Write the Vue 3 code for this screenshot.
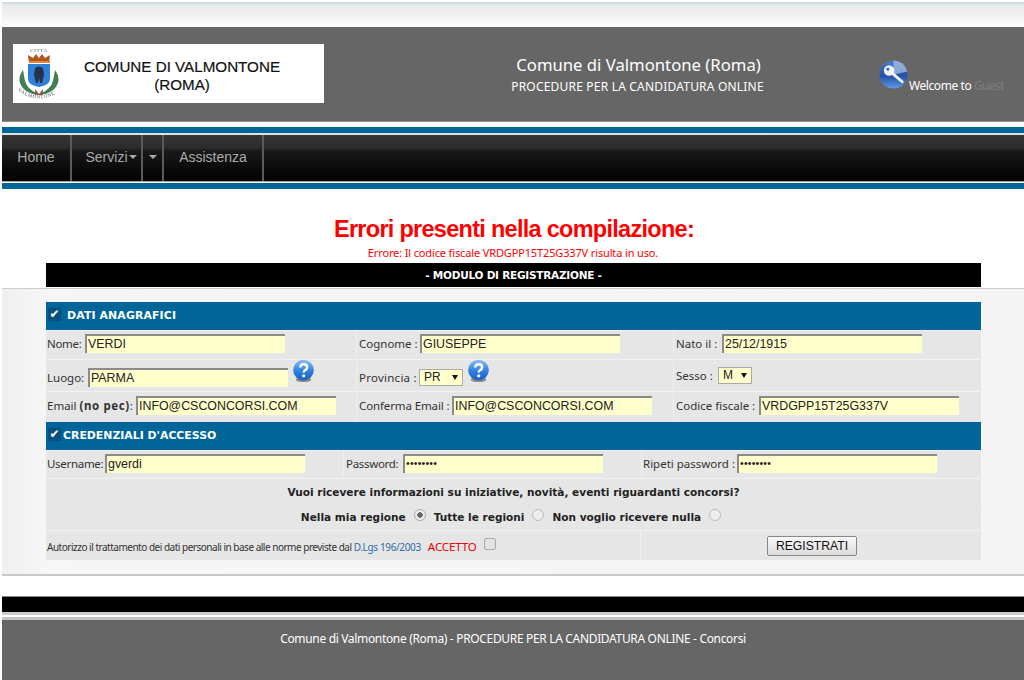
<script setup>
const news = [
  { label: 'Nella mia regione', on: true },
  { label: 'Tutte le regioni', on: false },
  { label: 'Non voglio ricevere nulla', on: false }
]
</script>

<template>
  <div class="page">
    <div class="topstrip"></div>
    <header class="head">
      <div class="logo">
        <svg class="emblem" viewBox="0 0 52 56" width="52" height="56" aria-hidden="true">
          <text x="26" y="6" text-anchor="middle" class="emb-t">CITTA</text>
          <path d="M16 17 L15 9 L20 12 L23 8 L26 12 L29 8 L32 12 L37 9 L36 17 Z" fill="#b5541c" />
          <rect x="16" y="15" width="21" height="2" fill="#d98a3c" />
          <path d="M15 18 H37 V33 Q37 39 26 41 Q15 39 15 33 Z" fill="#2f80d8" />
          <path d="M22 22 Q26 19 30 22 L31 29 L29 37 H27 L26 32 L25 37 H23 L21 29 Z" fill="#26324a" />
          <path d="M10 24 Q2 35 12 44 Q18 49 25 48 Q14 43 12 35 Z" fill="#3f7f52" />
          <path d="M42 24 Q50 35 40 44 Q34 49 27 48 Q38 43 40 35 Z" fill="#3f7f52" />
          <path d="M22 43 L26 48 L30 43 V49 H22 Z" fill="#8c5a4a" />
          <path id="emb-arc" d="M3 43 Q26 62 49 43" fill="none" />
          <text class="emb-t"><textPath href="#emb-arc" startOffset="4%">VALMONTONE</textPath></text>
        </svg>
        <div class="logo-text">COMUNE DI VALMONTONE<br />(ROMA)</div>
      </div>
      <div class="title">
        <div class="t1">Comune di Valmontone (Roma)</div>
        <div class="t2">PROCEDURE PER LA CANDIDATURA ONLINE</div>
      </div>
      <div class="welcome">
        <svg class="key" viewBox="0 0 30 30" width="29" height="29" aria-hidden="true">
          <defs>
            <linearGradient id="kg" x1="0" y1="0" x2="0" y2="1">
              <stop offset="0" stop-color="#4f7fcc" />
              <stop offset="0.55" stop-color="#2350a8" />
              <stop offset="1" stop-color="#5f9ae6" />
            </linearGradient>
          </defs>
          <circle cx="15" cy="15" r="14.5" fill="url(#kg)" />
          <path d="M15 15 L29.3 12 A14.5 14.5 0 0 0 15 .5 Z" fill="#a9bfdf" opacity=".75" />
          <path d="M13 13 L24 22.5" stroke="#f2f4f8" stroke-width="3" stroke-linecap="round" />
          <circle cx="10.5" cy="10.8" r="5.4" fill="#f2f4f8" />
          <circle cx="9.2" cy="9.6" r="1.5" fill="#2c62b8" />
        </svg>
        <span class="wtext">Welcome to <span class="guest">Guest</span></span>
      </div>
    </header>
    <div class="blue-top"></div>
    <nav class="nav">
      <a class="ni n-home">Home</a>
      <a class="ni n-serv">Servizi<i class="caret"></i></a>
      <a class="ni n-car"><i class="caret"></i></a>
      <a class="ni n-ass">Assistenza</a>
    </nav>
    <div class="blue-bot"></div>

    <h1 class="err-title">Errori presenti nella compilazione:</h1>
    <p class="err-msg">Errore: Il codice fiscale VRDGPP15T25G337V risulta in uso.</p>
    <div class="wrap top"><div class="modbar">- MODULO DI REGISTRAZIONE -</div></div>

    <section class="panel">
      <div class="wrap">
        <div class="sec sec1"><span class="chk">✔</span>DATI ANAGRAFICI</div>

        <div class="row grid3 r1">
          <div class="cell"><label class="l38 tight">Nome:</label><span class="inp">VERDI</span></div>
          <div class="cell"><label class="l61">Cognome :</label><span class="inp">GIUSEPPE</span></div>
          <div class="cell"><label class="l46">Nato il :</label><span class="inp">25/12/1915</span></div>
        </div>
        <div class="row grid3 r2">
          <div class="cell low"><label class="l41">Luogo:</label><span class="inp">PARMA</span>
            <svg class="help h1" viewBox="0 0 24 24" width="23" height="24" aria-hidden="true">
              <defs>
                <linearGradient id="hg" x1="0" y1="0" x2="0" y2="1">
                  <stop offset="0" stop-color="#8fc0f5" />
                  <stop offset="0.55" stop-color="#2e7fe0" />
                  <stop offset="1" stop-color="#1c5fc0" />
                </linearGradient>
              </defs>
              <ellipse cx="12" cy="21" rx="8" ry="2.6" fill="#8a8a8a" />
              <circle cx="12" cy="11" r="10.8" fill="url(#hg)" />
              <path d="M8.4 8.4 Q9 5 12.2 5 Q15.8 5 15.8 8 Q15.8 10 13.6 11.2 Q12.2 12 12.2 13.6" fill="none" stroke="#fff" stroke-width="2.5" />
              <circle cx="12.2" cy="17" r="1.7" fill="#fff" />
            </svg>
          </div>
          <div class="cell low"><label class="l60 l-prov">Provincia :</label><span class="sel s-pr">PR<i class="arr"></i></span>
            <svg class="help h2" viewBox="0 0 24 24" width="23" height="24" aria-hidden="true">
              <ellipse cx="12" cy="21" rx="8" ry="2.6" fill="#8a8a8a" />
              <circle cx="12" cy="11" r="10.8" fill="url(#hg)" />
              <path d="M8.4 8.4 Q9 5 12.2 5 Q15.8 5 15.8 8 Q15.8 10 13.6 11.2 Q12.2 12 12.2 13.6" fill="none" stroke="#fff" stroke-width="2.5" />
              <circle cx="12.2" cy="17" r="1.7" fill="#fff" />
            </svg>
          </div>
          <div class="cell"><label class="l42">Sesso :</label><span class="sel s-m">M<i class="arr"></i></span></div>
        </div>
        <div class="row grid3 r3">
          <div class="cell"><label class="l89">Email <b>(no pec)</b>:</label><span class="inp">INFO@CSCONCORSI.COM</span></div>
          <div class="cell"><label class="l93 semi">Conferma Email :</label><span class="inp">INFO@CSCONCORSI.COM</span></div>
          <div class="cell"><label class="l83">Codice fiscale :</label><span class="inp">VRDGPP15T25G337V</span></div>
        </div>

        <div class="sec sec2"><span class="chk">✔</span>CREDENZIALI D'ACCESSO</div>

        <div class="row gridc r4">
          <div class="cell"><label class="l58 tight">Username:</label><span class="inp">gverdi</span></div>
          <div class="cell c-pw"><label class="l57 tight">Password:</label><span class="inp dots">••••••••</span></div>
          <div class="cell"><label class="l94">Ripeti password :</label><span class="inp dots">••••••••</span></div>
        </div>

        <div class="news">
          <div class="q">Vuoi ricevere informazioni su iniziative, novità, eventi riguardanti concorsi?</div>
          <div class="opts">
            <template v-for="n in news" :key="n.label">
              <span>{{ n.label }}</span><i class="radio" :class="{ on: n.on }"></i>
            </template>
          </div>
        </div>

        <div class="row gridf">
          <div class="cell c-auth">
            <span class="auth">Autorizzo il trattamento dei dati personali in base alle norme previste dal <a>D.Lgs 196/2003</a></span>
            <span class="acc">ACCETTO</span><i class="cb"></i>
          </div>
          <div class="cell c-btn"><span class="btn">REGISTRATI</span></div>
        </div>
      </div>
    </section>

    <div class="foot-black"></div>
    <footer class="foot">Comune di Valmontone (Roma) - PROCEDURE PER LA CANDIDATURA ONLINE - Concorsi</footer>
  </div>
</template>

<style>
html, body { margin: 0; background: #fff; overflow: hidden; }
</style>

<style scoped>
.page {
  width: 1024px;
  height: 680px;
  overflow: hidden;
  font-family: "Noto Sans", "Open Sans", sans-serif;
  color: #333;
  background: #fff;
  font-size: 12px;
}
.topstrip {
  height: 23px;
  margin: 2px 0 2px 2px;
  background: linear-gradient(#c4d8dc 0, #e6ebec 3px, #f0eeee 10px, #fbfbfb 23px);
}
.head {
  margin-left: 2px;
  height: 94px;
  background: #666;
  border-bottom: 1px solid #8c8c8c;
  display: flex;
  align-items: flex-start;
  position: relative;
}
.logo {
  margin: 17px 0 0 11px;
  width: 311px;
  height: 59px;
  background: #fff;
  display: flex;
  align-items: center;
}
.emblem { flex: none; filter: blur(.35px); }
.emb-t { font: 5px "Liberation Serif", serif; fill: #555; letter-spacing: .6px; }
.logo-text {
  font: 15.2px/18px "Liberation Sans", Arial, sans-serif;
  color: #111;
  text-align: center;
  width: 198px;
  margin: 4px 0 0 18px;
  -webkit-text-stroke: .2px #111;
  white-space: nowrap;
}
.title {
  position: absolute;
  left: 434px;
  width: 403px;
  top: 26px;
  text-align: center;
  color: #fff;
}
.t1 { font-size: 16.7px; line-height: 24px; padding-left: 2px; }
.t2 { font-size: 12px; line-height: 20px; letter-spacing: .2px; }
.welcome { position: absolute; left: 877px; top: 33px; display: flex; align-items: flex-start; }
.key { flex: none; }
.wtext { margin: 17px 0 0 1px; font-size: 12px; letter-spacing: -.42px; color: #fff; white-space: nowrap; }
.guest { color: #7d7d7d; letter-spacing: -.7px; }

.blue-top {
  margin: 5px 0 0 2px;
  height: 6px;
  background: #006699;
  border-bottom: 2px solid #dce4e8;
}
.nav {
  margin-left: 2px;
  height: 46px;
  display: flex;
  background: linear-gradient(#353535 0, #2a2a2a 14px, #1a1a1a 15px, #000 45px);
  border-bottom: 1px solid #aaa;
}
.ni {
  box-sizing: border-box;
  height: 46px;
  padding-bottom: 2px;
  display: flex;
  align-items: center;
  justify-content: center;
  font: 14px "Liberation Sans", Arial, sans-serif;
  color: #aaa;
  border-right: 2px solid #5a5a5a;
}
.n-home { width: 70px; }
.n-serv { width: 71px; padding-left: 9px; }
.n-car { width: 21px; }
.n-ass { width: 100px; }
.caret {
  display: inline-block;
  width: 0; height: 0;
  border: 4px solid transparent;
  border-top-color: #aaa;
  border-bottom: 0;
  margin-left: 1px;
}
.blue-bot {
  margin: 1px 0 0 2px;
  height: 6px;
  background: #006699;
}

.err-title {
  margin: 26px 0 0 4px;
  text-align: center;
  color: #f00;
  font: bold 23.5px/28px "Liberation Sans", Arial, sans-serif;
  letter-spacing: -.72px;
}
.err-msg {
  margin: 2px 0 2px 2px;
  text-align: center;
  color: #f00;
  font-size: 11px;
  line-height: 16px;
  letter-spacing: -.14px;
}
.wrap { margin-left: 44px; width: 935px; }
.wrap.top { margin-left: 46px; }
.modbar {
  margin-top: 1px;
  height: 24px;
  background: #000;
  color: #fff;
  text-align: center;
  font: bold 10.5px/24px "DejaVu Sans", sans-serif;
  letter-spacing: -.24px;
}
.panel {
  margin: 1px 0 0 2px;
  background: linear-gradient(90deg, #f0f0f0, #f6f6f6 46px, #f4f4f4);
  border-top: 1px solid #ccc;
  border-bottom: 2px solid #c8c8c8;
  padding-top: 13px;
  height: 272px;
}
.sec {
  height: 28px;
  background: #006699;
  color: #fff;
  font: bold 10.9px/28px "DejaVu Sans", sans-serif;
  display: flex;
  align-items: center;
}
.sec1 { letter-spacing: .13px; }
.chk {
  width: 13px; height: 13px;
  background: #0b4f80;
  margin: -3px 6px 0 2px;
  font-size: 12px;
  line-height: 12px;
  text-align: center;
}
.sec2 .chk { margin-right: 2px; }
.row { display: grid; background: #e6e6e6; border-top: 1px solid #f2f2f2; box-sizing: border-box; }
.grid3 { grid-template-columns: 311px 317px 307px; }
.gridc { grid-template-columns: 298px 298px 339px; }
.gridf { grid-template-columns: 595px 340px; height: 30px; }
.r1 { height: 29px; padding-bottom: 4px; }
.r2 { height: 32px; }
.r3 { height: 31px; padding-bottom: 3px; }
.r4 { height: 28px; padding-bottom: 2px; }
.low { padding-top: 4px; }
.cell {
  display: flex;
  align-items: center;
  padding-left: 1px;
  border-right: 1px solid #f0f0f0;
  white-space: nowrap;
  min-width: 0;
  position: relative;
}
.cell:last-child { border-right: 0; }
.cell label { flex: none; font-size: 11.5px; }
.cell label b { letter-spacing: .6px; }
.cell label.tight { letter-spacing: -.3px; }
.cell label.semi { letter-spacing: -.12px; }
.grid3 .cell + .cell { padding-left: 2px; }
.l38 { width: 38px; }
.l41 { width: 41px; }
.l42 { width: 42px; }
.l46 { width: 46px; }
.l57 { width: 57px; }
.l58 { width: 58px; }
.l60 { width: 60px; }
.l61 { width: 61px; }
.l83 { width: 83px; }
.l89 { width: 89px; }
.l93 { width: 93px; }
.l94 { width: 94px; }
.l-prov { letter-spacing: .25px; }
.inp {
  box-sizing: border-box;
  height: 19px;
  width: 200px;
  background: #ffffcc;
  border-top: 2px solid #8b8b8b;
  border-left: 2px solid #8b8b8b;
  font: 12.4px/16px "Liberation Sans", Arial, sans-serif;
  color: #222;
  padding-left: 1px;
}
.dots { font-size: 10.5px; letter-spacing: .2px; line-height: 15px; }
.c-pw { padding-left: 2px; }
.sel {
  box-sizing: border-box;
  height: 17px;
  background: #ffffcc;
  border: 1px solid #aaa;
  font: 12px/15px "Liberation Sans", Arial, sans-serif;
  color: #222;
  display: inline-flex;
  align-items: center;
  padding-left: 4px;
  position: relative;
}
.s-pr { width: 44px; }
.s-m { width: 34px; }
.arr {
  position: absolute;
  right: 4px;
  top: 5px;
  width: 0; height: 0;
  border: 3.5px solid transparent;
  border-top: 5px solid #111;
  border-bottom: 0;
}
.help { position: absolute; top: -1px; }
.h1 { left: 246px; }
.h2 { left: 110px; }
.news {
  height: 52px;
  background: #e6e6e6;
  border-top: 1px solid #f2f2f2;
  box-sizing: border-box;
  text-align: center;
  font: bold 10.55px "DejaVu Sans", sans-serif;
  color: #222;
  padding-top: 6px;
}
.q { line-height: 14px; }
.opts { margin-top: 11px; padding-right: 5px; display: flex; justify-content: center; align-items: center; line-height: 14px; }
.radio {
  width: 12px; height: 12px;
  border-radius: 50%;
  border: 1px solid #bbb;
  background: #eee;
  box-sizing: border-box;
  margin: -4px 8px 0 8px;
}
.radio:last-child { margin-right: 0; }
.radio.on { background: radial-gradient(circle, #666 0 2.5px, #eee 3px); border-color: #aaa; }
.c-auth { font-size: 10px; letter-spacing: -.49px; padding-top: 2px; }
.auth a { color: #2b6ea8; letter-spacing: -.35px; }
.acc { color: #e00; font-size: 11.5px; margin-left: 7px; letter-spacing: -.1px; }
.cb {
  width: 12px; height: 12px;
  border: 1px solid #aaa;
  border-radius: 2px;
  background: #e2e2e2;
  box-sizing: border-box;
  margin: -5px 0 0 7px;
}
.c-btn { justify-content: center; padding-left: 0; }
.btn {
  box-sizing: border-box;
  margin-left: 2px;
  width: 90px;
  height: 20px;
  background: linear-gradient(#f8f8f8, #dcdcdc);
  border: 1px solid #888;
  border-radius: 2px;
  font: 12.2px/18px "Liberation Sans", Arial, sans-serif;
  color: #111;
  text-align: center;
}
.foot-black {
  margin: 20px 0 0 2px;
  height: 15px;
  background: #000;
  border-top: 1px solid #888;
  border-bottom: 3px solid #ccc;
}
.foot {
  margin: 2px 0 0 2px;
  height: 100px;
  background: #666;
  border-top: 3px solid #c4c4c4;
  color: #fff;
  text-align: center;
  font-size: 12px;
  line-height: 38px;
  letter-spacing: -.33px;
}
</style>
